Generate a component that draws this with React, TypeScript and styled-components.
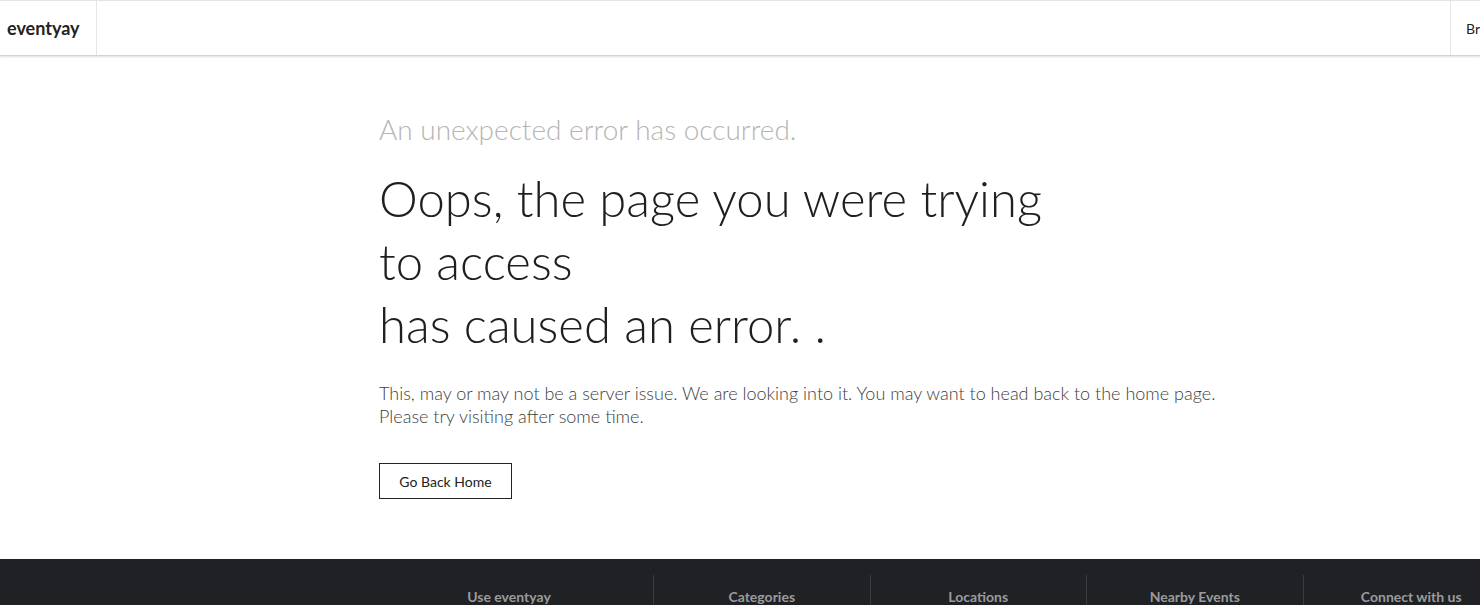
import React from "react";
import styled, { createGlobalStyle } from "styled-components";

const Global = createGlobalStyle`
  html, body { margin: 0; padding: 0; background: #fff; }
  body { font-family: Lato, "Helvetica Neue", Arial, sans-serif; overflow: hidden; }
  * { box-sizing: border-box; }
`;

const Page = styled.div`
  width: 1480px;
  overflow: hidden;
`;

const Header = styled.header`
  height: 56px;
  display: flex;
  align-items: stretch;
  border-top: 1px solid #e4e4e4;
  border-bottom: 1px solid #d4d4d5;
  box-shadow: 0 1px 2px rgba(34, 36, 38, 0.15);
  background: #fff;
`;

const Brand = styled.a`
  display: flex;
  align-items: center;
  padding: 0 15px 0 7px;
  width: 97px;
  border-right: 1px solid #e6e6e6;
  font-size: 18px;
  font-weight: 700;
  color: #222;
  text-decoration: none;
`;

const Spacer = styled.div`
  flex: 1;
`;

const NavItem = styled.a`
  display: flex;
  align-items: center;
  padding-left: 15px;
  width: 30px;
  border-left: 1px solid #e6e6e6;
  font-size: 14px;
  color: #222;
  white-space: nowrap;
  overflow: hidden;
`;

const Main = styled.main`
  height: 502px;
  padding: 54px 0 0 379px;
`;

const Sub = styled.div`
  font-size: 28px;
  font-weight: 300;
  color: #b5b5b5;
  line-height: 38px;
  margin: 0;
`;

const Headline = styled.h1`
  margin: 19px 0 0;
  font-size: 49px;
  font-weight: 300;
  line-height: 63px;
  color: #1f1f1f;
`;

const Body = styled.p`
  margin: 26px 0 0;
  font-size: 18px;
  font-weight: 300;
  line-height: 23px;
  color: #404040;
`;

const Button = styled.button`
  margin-top: 35px;
  height: 36px;
  width: 133px;
  border: 1px solid #222;
  background: #fff;
  font-family: inherit;
  font-size: 14px;
  color: #222;
  padding: 0;
  cursor: pointer;
`;

const Footer = styled.footer`
  background: #202124;
  height: 60px;
  margin-top: 1px;
  padding: 16px 0 0 365px;
  display: grid;
  grid-template-columns: 288px repeat(4, 216.5px);
`;

const Col = styled.div<{ $first?: boolean }>`
  border-left: ${(p) => (p.$first ? "none" : "1px solid #3a3b3d")};
  text-align: center;
  padding-top: 13px;
  font-size: 14px;
  font-weight: 700;
  color: #9a9b9d;
  white-space: nowrap;
`;

export default function App() {
  const cols = ["Use eventyay", "Categories", "Locations", "Nearby Events", "Connect with us"];
  return (
    <Page>
      <Global />
      <Header>
        <Brand href="#">eventyay</Brand>
        <Spacer />
        <NavItem>Browse Events</NavItem>
      </Header>
      <Main>
        <Sub>An unexpected error has occurred.</Sub>
        <Headline>
          Oops, the page you were trying
          <br />
          to access
          <br />
          has caused an error. .
        </Headline>
        <Body>
          This, may or may not be a server issue. We are looking into it. You may want to head back to the home page.
          <br />
          Please try visiting after some time.
        </Body>
        <Button>Go Back Home</Button>
      </Main>
      <Footer>
        {cols.map((c, i) => (
          <Col key={c} $first={i === 0}>
            {c}
          </Col>
        ))}
      </Footer>
    </Page>
  );
}
